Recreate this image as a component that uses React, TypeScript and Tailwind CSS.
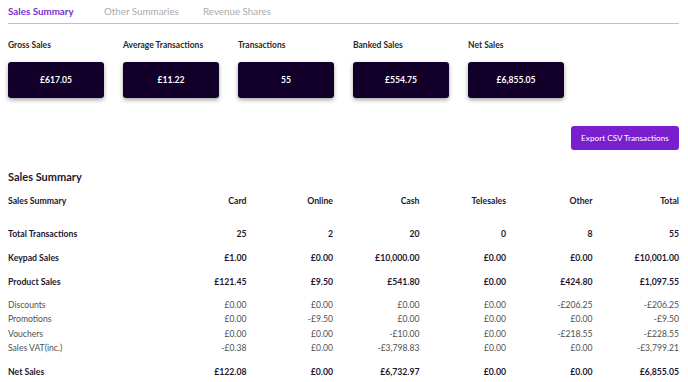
const cards = [
  { label: "Gross Sales", value: "£617.05" },
  { label: "Average Transactions", value: "£11.22" },
  { label: "Transactions", value: "55" },
  { label: "Banked Sales", value: "£554.75" },
  { label: "Net Sales", value: "£6,855.05" },
];

const cols = ["Card", "Online", "Cash", "Telesales", "Other", "Total"];

type Row = { label: string; values: string[] };

const topRows: Row[] = [
  { label: "Total Transactions", values: ["25", "2", "20", "0", "8", "55"] },
  { label: "Keypad Sales", values: ["£1.00", "£0.00", "£10,000.00", "£0.00", "£0.00", "£10,001.00"] },
  { label: "Product Sales", values: ["£121.45", "£9.50", "£541.80", "£0.00", "£424.80", "£1,097.55"] },
];

const minorRows: Row[] = [
  { label: "Discounts", values: ["£0.00", "£0.00", "£0.00", "£0.00", "-£206.25", "-£206.25"] },
  { label: "Promotions", values: ["£0.00", "-£9.50", "£0.00", "£0.00", "£0.00", "-£9.50"] },
  { label: "Vouchers", values: ["£0.00", "£0.00", "-£10.00", "£0.00", "-£218.55", "-£228.55"] },
  { label: "Sales VAT(inc.)", values: ["-£0.38", "£0.00", "-£3,798.83", "£0.00", "£0.00", "-£3,799.21"] },
];

const netRow: Row = {
  label: "Net Sales",
  values: ["£122.08", "£0.00", "£6,732.97", "£0.00", "£0.00", "£6,855.05"],
};

function BoldRow({ row }: { row: Row }) {
  return (
    <div className="grid grid-cols-[152px_repeat(6,1fr)] h-[24px] items-center font-bold text-[8.7px] text-[#1d1730]">
      <span>{row.label}</span>
      {row.values.map((v, i) => (
        <span key={i} className="text-right">
          {v}
        </span>
      ))}
    </div>
  );
}

function MinorRow({ row }: { row: Row }) {
  return (
    <div className="grid grid-cols-[152px_repeat(6,1fr)] h-[14.5px] items-center text-[8.6px] text-[#505050]">
      <span>{row.label}</span>
      {row.values.map((v, i) => (
        <span key={i} className="text-right">
          {v}
        </span>
      ))}
    </div>
  );
}

export default function App() {
  return (
    <div
      className="w-[688px] h-[382px] overflow-hidden bg-white pl-2 pr-[9px]"
      style={{ fontFamily: "Lato, 'Noto Sans', sans-serif" }}
    >
      {/* Tabs */}
      <div className="flex h-[24px] items-center border-b border-[#b7bfe3] text-[9.8px]">
        <span className="w-[96px] font-bold text-[#7b2fd6]">Sales Summary</span>
        <span className="w-[99px] text-[#ababab]">Other Summaries</span>
        <span className="text-[#ababab]">Revenue Shares</span>
      </div>

      {/* Stat cards */}
      <div className="mt-[15px] flex gap-[19px]">
        {cards.map((c) => (
          <div key={c.label} className="w-[96px]">
            <div className="h-[12px] leading-[12px] text-[8.5px] font-bold text-[#2a2a2a] whitespace-nowrap">
              {c.label}
            </div>
            <div className="mt-[11px] flex h-[36px] items-center justify-center rounded-[3px] bg-[#12002b] text-[8.6px] font-bold text-white shadow-[0_2px_4px_rgba(0,0,0,0.35)]">
              {c.value}
            </div>
          </div>
        ))}
      </div>

      {/* Export */}
      <div className="mt-[28px] flex justify-end">
        <button className="h-[24px] w-[108px] rounded-[3px] bg-[#7a1fcf] text-[8.2px] text-white">
          Export CSV Transactions
        </button>
      </div>

      {/* Table */}
      <h2 className="mt-[19px] h-[16px] leading-[16px] text-[11px] font-bold text-[#1d1730]">
        Sales Summary
      </h2>

      <div className="mt-[4px]">
        <div className="mb-[9px] grid grid-cols-[152px_repeat(6,1fr)] h-[24px] items-center font-bold text-[8.7px] text-[#1d1730]">
          <span>Sales Summary</span>
          {cols.map((c) => (
            <span key={c} className="text-right">
              {c}
            </span>
          ))}
        </div>
        {topRows.map((r) => (
          <BoldRow key={r.label} row={r} />
        ))}
        <div className="py-[4px]">
          {minorRows.map((r) => (
            <MinorRow key={r.label} row={r} />
          ))}
        </div>
        <BoldRow row={netRow} />
      </div>
    </div>
  );
}
